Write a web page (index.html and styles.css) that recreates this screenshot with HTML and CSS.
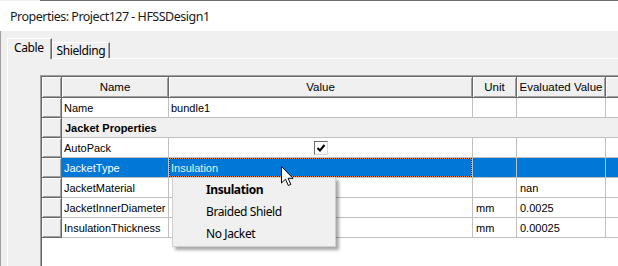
FILE: index.html
```html
<!DOCTYPE html>
<html>
<head>
    <title>Properties: Project127 - HFSSDesign1</title>
    <link rel="stylesheet" href="styles.css">
</head>
<body>
    <div class="window">
        <div class="frame-edge"></div>
        <div class="titlebar">Properties: Project127 - HFSSDesign1</div>

        <div class="client">
            <div class="tabs">
                <div class="tab active">Cable</div>
                <div class="tab">Shielding</div>
            </div>

            <div class="panel">
                <div class="grid-frame">
                    <div class="grid">
                        <table class="props">
                            <colgroup>
                                <col class="c-rh">
                                <col class="c-name">
                                <col class="c-value">
                                <col class="c-unit">
                                <col class="c-eval">
                                <col class="c-extra">
                            </colgroup>
                            <thead>
                                <tr>
                                    <th class="rh"></th>
                                    <th>Name</th>
                                    <th>Value</th>
                                    <th>Unit</th>
                                    <th>Evaluated Value</th>
                                    <th></th>
                                </tr>
                            </thead>
                            <tbody>
                                <tr>
                                    <th class="rh"></th>
                                    <td>Name</td>
                                    <td>bundle1</td>
                                    <td></td>
                                    <td></td>
                                    <td></td>
                                </tr>
                                <tr class="group">
                                    <th class="rh"></th>
                                    <td colspan="5">Jacket Properties</td>
                                </tr>
                                <tr>
                                    <th class="rh"></th>
                                    <td>AutoPack</td>
                                    <td class="center">
                                        <span class="checkbox">
                                            <svg width="12" height="12" viewBox="0 0 12 12">
                                                <path d="M2.5 6 L5 8.5 L9.5 3" fill="none" stroke="#000" stroke-width="2"/>
                                            </svg>
                                        </span>
                                    </td>
                                    <td></td>
                                    <td></td>
                                    <td></td>
                                </tr>
                                <tr class="selected">
                                    <th class="rh"></th>
                                    <td>JacketType</td>
                                    <td class="editing">
                                        Insulation
                                        <ul class="dropdown">
                                            <li class="current">Insulation</li>
                                            <li>Braided Shield</li>
                                            <li>No Jacket</li>
                                        </ul>
                                    </td>
                                    <td></td>
                                    <td></td>
                                    <td></td>
                                </tr>
                                <tr>
                                    <th class="rh"></th>
                                    <td>JacketMaterial</td>
                                    <td></td>
                                    <td></td>
                                    <td class="num">nan</td>
                                    <td></td>
                                </tr>
                                <tr>
                                    <th class="rh"></th>
                                    <td>JacketInnerDiameter</td>
                                    <td></td>
                                    <td class="num">mm</td>
                                    <td class="num">0.0025</td>
                                    <td></td>
                                </tr>
                                <tr>
                                    <th class="rh"></th>
                                    <td>InsulationThickness</td>
                                    <td></td>
                                    <td class="num">mm</td>
                                    <td class="num">0.00025</td>
                                    <td></td>
                                </tr>
                            </tbody>
                        </table>
                    </div>
                </div>
            </div>
        </div>

        <!-- mouse pointer over the open list -->
        <svg class="pointer" width="13" height="21" viewBox="0 0 13 21">
            <path d="M0.5 0.5 L0.5 17 L4.5 13.2 L7.3 19.5 L9.8 18.4 L7.1 12.3 L12 12.3 Z" fill="#fff" stroke="#000" stroke-width="1"/>
        </svg>
    </div>
</body>
</html>
```

FILE: styles.css
```css
html, body {
    margin: 0;
    padding: 0;
}

body {
    width: 618px;
    height: 266px;
    overflow: hidden;
    background-color: #f0f0f0;
    font-family: "Noto Sans", "Liberation Sans", sans-serif;
    font-size: 12px;
    color: #000;
}

.window {
    position: relative;
    width: 618px;
    height: 266px;
    overflow: hidden;
}

.frame-edge {
    height: 1px;
    margin-left: 40px;
    background-color: #6d6d6d;
}

.titlebar {
    height: 30px;
    line-height: 31px;
    padding-left: 10px;
    background-color: #fff;
    color: #1a1a1a;
    font-size: 12.5px;
    letter-spacing: -0.5px;
    white-space: nowrap;
}

.client {
    height: 235px;
    border-left: 1px solid #a0a0a0;
    padding-top: 7px;
    padding-left: 6px;
    box-sizing: border-box;
}

/* tab strip */

.tabs {
    display: flex;
    align-items: flex-end;
    height: 20px;
    letter-spacing: -0.4px;
}

.tab {
    box-sizing: border-box;
    height: 16px;
    line-height: 15px;
    padding: 0 4px 0 4px;
    background-color: #f0f0f0;
    border-top: 1px solid #fff;
    border-left: 1px solid #fff;
    border-right: 1px solid #696969;
    box-shadow: inset -1px 0 0 #a0a0a0;
}

.tab.active {
    position: relative;
    z-index: 1;
    height: 21px;
    line-height: 18px;
    margin-bottom: -1px;
    padding: 0 7px 0 6px;
}

.panel {
    border-top: 1px solid #fff;
    border-left: 1px solid #fff;
    padding: 16px 0 0 32px;
    height: 200px;
}

/* property grid */

.grid-frame {
    border-top: 1px solid #a0a0a0;
    border-left: 1px solid #a0a0a0;
    height: 200px;
}

.grid {
    border-top: 1px solid #696969;
    border-left: 1px solid #696969;
    background-color: #fff;
    height: 200px;
}

.props {
    table-layout: fixed;
    border-collapse: separate;
    border-spacing: 0;
    width: 624px;
    font-family: "Liberation Sans", Arial, sans-serif;
    font-size: 11px;
}

.c-rh { width: 20px; }
.c-name { width: 107px; }
.c-value { width: 304px; }
.c-unit { width: 44px; }
.c-eval { width: 89px; }
.c-extra { width: 60px; }

.props th,
.props td {
    box-sizing: border-box;
    height: 20px;
    padding: 0 2px;
    white-space: nowrap;
    overflow: visible;
}

.props th {
    background-color: #f0f0f0;
    font-weight: normal;
    font-size: 11.5px;
    text-align: center;
    border-right: 1px solid #696969;
    border-bottom: 1px solid #696969;
    box-shadow: inset 1px 1px 0 #fff, inset -1px -1px 0 #a0a0a0;
}

.props thead th {
    height: 21px;
}

.props td {
    border-right: 1px solid #c0c0c0;
    border-bottom: 1px solid #c0c0c0;
    text-align: left;
}

.props td.num {
    padding-left: 3px;
}

.props td.center {
    text-align: center;
}

.group td {
    background-color: #f0f0f0;
    font-weight: bold;
    padding-left: 3px;
}

.selected td {
    background-color: #0078d7;
    color: #fff;
}

.selected td.editing {
    position: relative;
    color: #e6f4e4;
    overflow: visible;
    box-shadow: inset 0 0 0 1px #e8891c;
}

.selected td.editing::after {
    content: "";
    position: absolute;
    top: 0;
    left: 0;
    right: 0;
    bottom: 0;
    border: 1px dotted #1a1a1a;
}

.checkbox {
    display: inline-block;
    box-sizing: border-box;
    width: 14px;
    height: 14px;
    vertical-align: middle;
    background-color: #fff;
    border-top: 1px solid #6a6a6a;
    border-left: 1px solid #6a6a6a;
    border-right: 1px solid #d8d8d8;
    border-bottom: 1px solid #d8d8d8;
    line-height: 0;
}

/* open combo list */

.dropdown {
    position: absolute;
    top: 100%;
    left: 3px;
    z-index: 2;
    box-sizing: border-box;
    width: 164px;
    height: 70px;
    margin: 0;
    padding: 1px 0 0;
    list-style: none;
    background-color: #f0f0f0;
    border: 1px solid #cfcfcf;
    box-shadow: 3px 3px 3px rgba(0, 0, 0, 0.35);
    font-family: "Noto Sans", "Liberation Sans", sans-serif;
    font-size: 12px;
    letter-spacing: -0.4px;
    color: #000;
}

.dropdown li {
    height: 22px;
    line-height: 22px;
    padding-left: 33px;
}

.dropdown li.current {
    font-weight: bold;
}

.pointer {
    position: absolute;
    left: 281px;
    top: 166px;
    z-index: 3;
}
```
